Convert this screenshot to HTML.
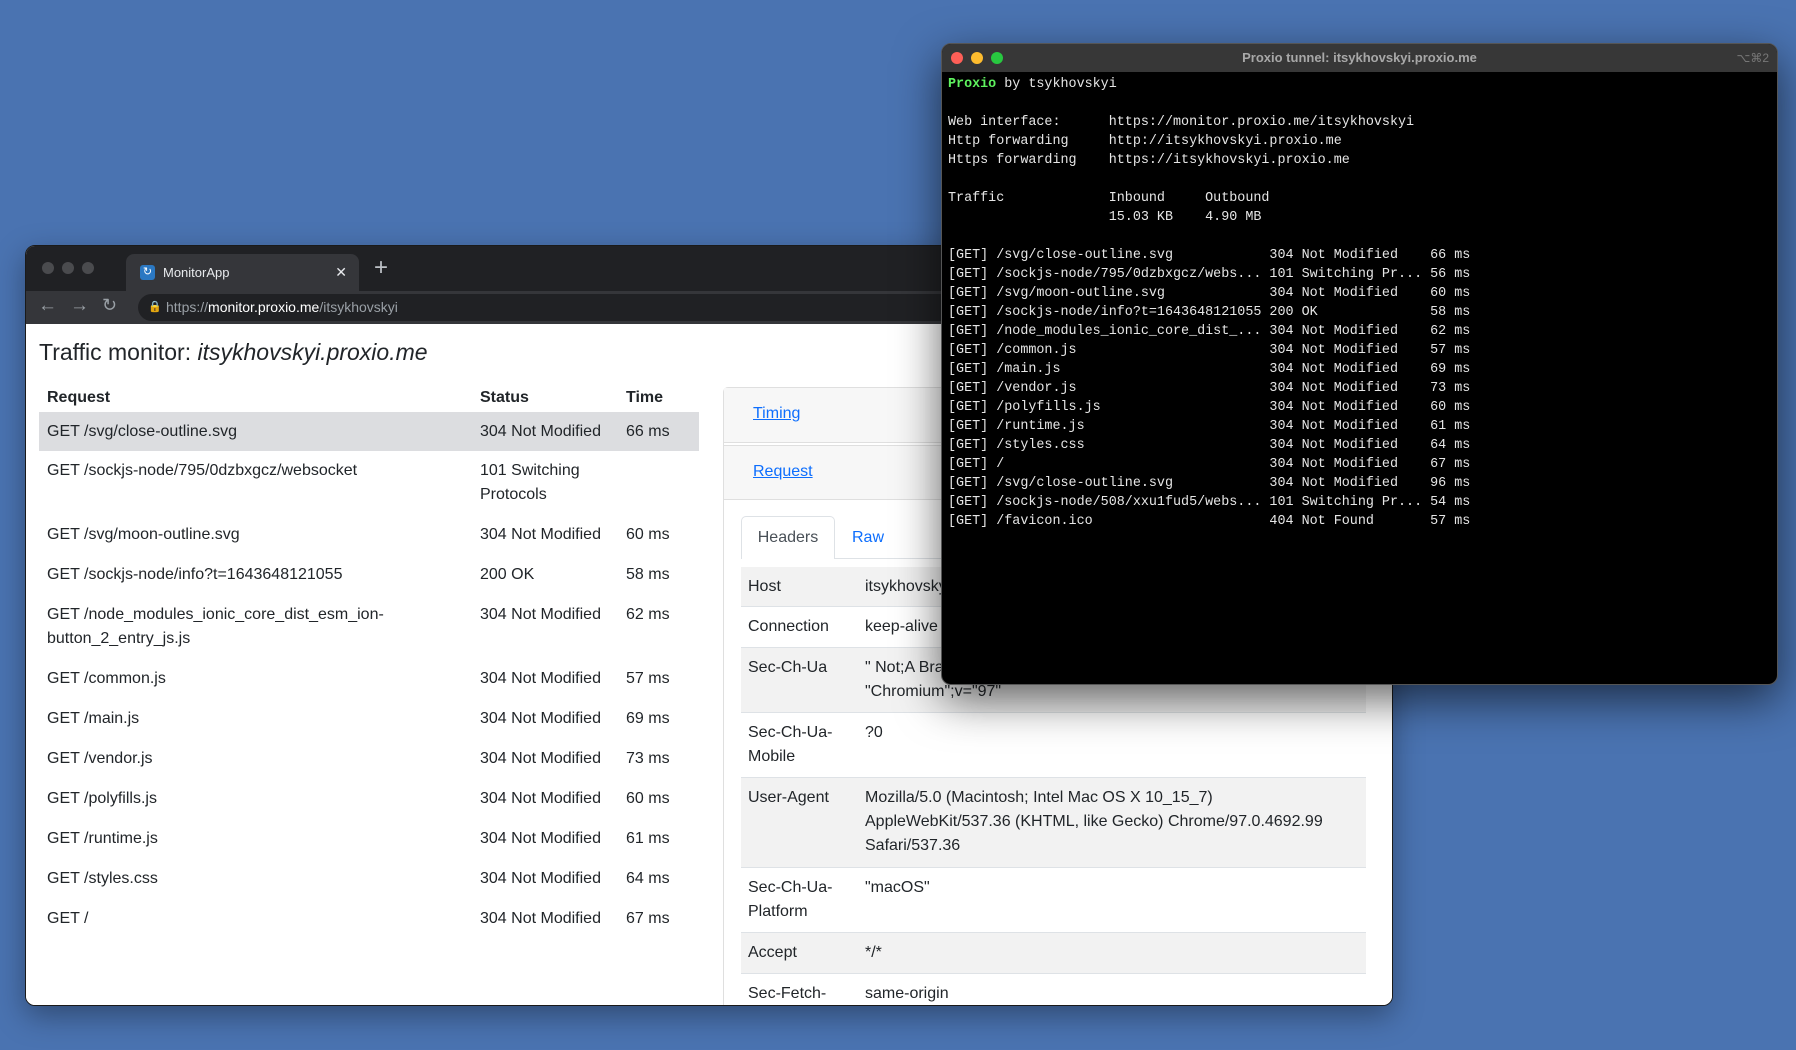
<!DOCTYPE html>
<html><head><meta charset="utf-8"><style>
*{margin:0;padding:0;box-sizing:border-box}
body{width:1796px;height:1050px;background:#4a73b1;position:relative;overflow:hidden;font-family:"Liberation Sans",sans-serif}
.br{position:absolute;left:25px;top:245px;width:1368px;height:761px;background:#fff;border-radius:10px;overflow:hidden;box-shadow:0 10px 30px rgba(0,0,0,.35);border:1px solid #1a1a1a}
.tabs{position:absolute;left:0;top:0;width:100%;height:45px;background:#202124}
.dot{position:absolute;top:16px;width:12px;height:12px;border-radius:50%;background:#4a4b4e}
.tab{position:absolute;left:100px;top:8px;width:233px;height:37px;background:#35363a;border-radius:8px 8px 0 0;color:#e8eaed;font-size:13px}
.addr{position:absolute;left:0;top:45px;width:100%;height:33px;background:#35363a}
.pill{position:absolute;left:112px;top:3px;right:0;height:27px;background:#202124;border-radius:14px;color:#9aa0a6;font-size:14px;line-height:27px;padding-left:28px}
.content{position:absolute;left:0;top:78px;right:0;bottom:0;background:#fff;color:#212529;font-size:16px}
h1{position:absolute;left:13px;top:15px;font-size:23px;font-weight:normal}
.tbl{position:absolute;left:13px;top:62px;width:660px}
.row{position:relative;line-height:24px}
.row span{position:absolute;white-space:nowrap}
.c1{left:8px}.c2{left:441px}.c3{left:587px}
.pan{position:absolute;left:697px;top:63px;width:700px;bottom:-5px;border:1px solid #dfdfdf;border-radius:5px}
.card{position:absolute;left:0;right:0;height:55px;background:#f7f7f7;border-bottom:1px solid #dfdfdf}
.card a{position:absolute;left:29px;top:17px;color:#0d6efd;text-decoration:underline}
.ht{position:absolute;left:17px;top:179px;width:625px}
.hrow{position:relative;border-top:1px solid #dee2e6;line-height:24px}
.hrow span{position:absolute}
.term{position:absolute;left:941px;top:43px;width:837px;height:642px;background:#000;border-radius:10px;overflow:hidden;box-shadow:0 15px 45px rgba(0,0,0,.6);border:1px solid #555}
.tt{height:28px;background:#373737;color:#a8a8a8;font-size:13px;text-align:center;line-height:28px;font-weight:bold;position:relative}
.td{position:absolute;top:8px;width:12px;height:12px;border-radius:50%}
pre{position:absolute;left:6px;top:31px;font-family:"Liberation Mono",monospace;font-size:13.4px;line-height:19px;color:#e6e6e6}
</style></head><body>
<div class="br">
 <div class="tabs">
  <div class="dot" style="left:16px"></div><div class="dot" style="left:36px"></div><div class="dot" style="left:56px"></div>
  <div class="tab"><div style="position:absolute;left:14px;top:11px;width:15px;height:15px;background:#2b78c2;border-radius:3px;color:#fff;font-size:11px;text-align:center;line-height:15px">↻</div><span style="position:absolute;left:37px;top:11px">MonitorApp</span><span style="position:absolute;right:12px;top:10px;font-size:14px">✕</span></div>
  <span style="position:absolute;left:348px;top:8px;color:#bdc1c6;font-size:24px">+</span>
 </div>
 <div class="addr">
  <span style="position:absolute;left:12px;top:4px;color:#9aa0a6;font-size:19px">←</span>
  <span style="position:absolute;left:44px;top:4px;color:#9aa0a6;font-size:19px">→</span>
  <span style="position:absolute;left:76px;top:4px;color:#9aa0a6;font-size:18px">↻</span>
  <div class="pill"><span style="position:absolute;left:10px;top:0;font-size:11px">🔒</span>https://<span style="color:#fff">monitor.proxio.me</span>/itsykhovskyi</div>
 </div>
 <div class="content">
  <h1>Traffic monitor: <i>itsykhovskyi.proxio.me</i></h1>
  <div class="tbl">
   <div class="row" style="height:26px;font-weight:bold"><span class="c1" style="top:0">Request</span><span class="c2" style="top:0">Status</span><span class="c3" style="top:0">Time</span></div>
   <div class="row" style="height:39px;background:#dcdde0"><span class="c1" style="top:8px">GET /svg/close-outline.svg</span><span class="c2" style="top:8px">304 Not Modified</span><span class="c3" style="top:8px">66 ms</span></div>
   <div class="row" style="height:64px"><span class="c1" style="top:8px">GET /sockjs-node/795/0dzbxgcz/websocket</span><span class="c2" style="top:8px">101 Switching<br>Protocols</span></div>
   <div class="row" style="height:40px"><span class="c1" style="top:8px">GET /svg/moon-outline.svg</span><span class="c2" style="top:8px">304 Not Modified</span><span class="c3" style="top:8px">60 ms</span></div>
   <div class="row" style="height:40px"><span class="c1" style="top:8px">GET /sockjs-node/info?t=1643648121055</span><span class="c2" style="top:8px">200 OK</span><span class="c3" style="top:8px">58 ms</span></div>
   <div class="row" style="height:64px"><span class="c1" style="top:8px">GET /node_modules_ionic_core_dist_esm_ion-<br>button_2_entry_js.js</span><span class="c2" style="top:8px">304 Not Modified</span><span class="c3" style="top:8px">62 ms</span></div>
   <div class="row" style="height:40px"><span class="c1" style="top:8px">GET /common.js</span><span class="c2" style="top:8px">304 Not Modified</span><span class="c3" style="top:8px">57 ms</span></div>
   <div class="row" style="height:40px"><span class="c1" style="top:8px">GET /main.js</span><span class="c2" style="top:8px">304 Not Modified</span><span class="c3" style="top:8px">69 ms</span></div>
   <div class="row" style="height:40px"><span class="c1" style="top:8px">GET /vendor.js</span><span class="c2" style="top:8px">304 Not Modified</span><span class="c3" style="top:8px">73 ms</span></div>
   <div class="row" style="height:40px"><span class="c1" style="top:8px">GET /polyfills.js</span><span class="c2" style="top:8px">304 Not Modified</span><span class="c3" style="top:8px">60 ms</span></div>
   <div class="row" style="height:40px"><span class="c1" style="top:8px">GET /runtime.js</span><span class="c2" style="top:8px">304 Not Modified</span><span class="c3" style="top:8px">61 ms</span></div>
   <div class="row" style="height:40px"><span class="c1" style="top:8px">GET /styles.css</span><span class="c2" style="top:8px">304 Not Modified</span><span class="c3" style="top:8px">64 ms</span></div>
   <div class="row" style="height:40px"><span class="c1" style="top:8px">GET /</span><span class="c2" style="top:8px">304 Not Modified</span><span class="c3" style="top:8px">67 ms</span></div>
  </div>
  <div class="pan">
   <div class="card" style="top:0"><a>Timing</a></div>
   <div class="card" style="top:57px;border-top:1px solid #dfdfdf"><a>Request</a></div>
   <div style="position:absolute;left:17px;top:170px;width:625px;border-top:1px solid #dee2e6"></div>
   <div style="position:absolute;left:17px;top:128px;width:94px;height:43px;background:#fff;border:1px solid #dee2e6;border-bottom:none;border-radius:5px 5px 0 0;color:#495057;line-height:41px;text-align:center">Headers</div>
   <div style="position:absolute;left:128px;top:129px;color:#0d6efd;line-height:41px">Raw</div>
   <div class="ht">
    <div class="hrow" style="height:39px;background:#f2f2f2;border-top:none"><span style="left:7px;top:8px">Host</span><span style="left:124px;top:8px">itsykhovskyi.proxio.me</span></div>
    <div class="hrow" style="height:41px"><span style="left:7px;top:8px">Connection</span><span style="left:124px;top:8px">keep-alive</span></div>
    <div class="hrow" style="height:65px;background:#f2f2f2"><span style="left:7px;top:8px">Sec-Ch-Ua</span><span style="left:124px;top:8px">" Not;A Brand";v="99", "Google Chrome";v="97",<br>"Chromium";v="97"</span></div>
    <div class="hrow" style="height:65px"><span style="left:7px;top:8px">Sec-Ch-Ua-<br>Mobile</span><span style="left:124px;top:8px">?0</span></div>
    <div class="hrow" style="height:90px;background:#f2f2f2"><span style="left:7px;top:8px">User-Agent</span><span style="left:124px;top:8px">Mozilla/5.0 (Macintosh; Intel Mac OS X 10_15_7)<br>AppleWebKit/537.36 (KHTML, like Gecko) Chrome/97.0.4692.99<br>Safari/537.36</span></div>
    <div class="hrow" style="height:65px"><span style="left:7px;top:8px">Sec-Ch-Ua-<br>Platform</span><span style="left:124px;top:8px">"macOS"</span></div>
    <div class="hrow" style="height:41px;background:#f2f2f2"><span style="left:7px;top:8px">Accept</span><span style="left:124px;top:8px">*/*</span></div>
    <div class="hrow" style="height:60px"><span style="left:7px;top:8px">Sec-Fetch-</span><span style="left:124px;top:8px">same-origin</span></div>
   </div>
  </div>
 </div>
</div>
<div class="term">
 <div class="tt"><div class="td" style="left:9px;background:#fe5f57"></div><div class="td" style="left:29px;background:#febc2e"></div><div class="td" style="left:49px;background:#28c840"></div>Proxio tunnel: itsykhovskyi.proxio.me<span style="position:absolute;right:8px;top:0;font-weight:normal;color:#777;font-size:12px">⌥⌘2</span></div>
<pre><span style="color:#5ff35f;font-weight:bold">Proxio</span> by tsykhovskyi

Web interface:      https://monitor.proxio.me/itsykhovskyi
Http forwarding     http://itsykhovskyi.proxio.me
Https forwarding    https://itsykhovskyi.proxio.me

Traffic             Inbound     Outbound
                    15.03 KB    4.90 MB

[GET] /svg/close-outline.svg            304 Not Modified    66 ms
[GET] /sockjs-node/795/0dzbxgcz/webs... 101 Switching Pr... 56 ms
[GET] /svg/moon-outline.svg             304 Not Modified    60 ms
[GET] /sockjs-node/info?t=1643648121055 200 OK              58 ms
[GET] /node_modules_ionic_core_dist_... 304 Not Modified    62 ms
[GET] /common.js                        304 Not Modified    57 ms
[GET] /main.js                          304 Not Modified    69 ms
[GET] /vendor.js                        304 Not Modified    73 ms
[GET] /polyfills.js                     304 Not Modified    60 ms
[GET] /runtime.js                       304 Not Modified    61 ms
[GET] /styles.css                       304 Not Modified    64 ms
[GET] /                                 304 Not Modified    67 ms
[GET] /svg/close-outline.svg            304 Not Modified    96 ms
[GET] /sockjs-node/508/xxu1fud5/webs... 101 Switching Pr... 54 ms
[GET] /favicon.ico                      404 Not Found       57 ms</pre>
</div>
</body></html>
